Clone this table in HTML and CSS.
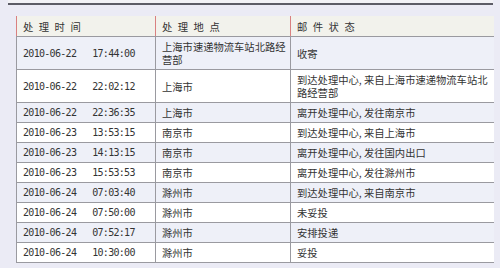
FILE: index.html
```html
<!DOCTYPE html>
<html lang="zh-CN">
<head>
<meta charset="utf-8">
<title>邮件跟踪</title>
<link rel="stylesheet" href="styles.css">
</head>
<body>
<div class="topbar"></div>
<div class="wrap">
<table class="track">
<colgroup><col class="c1"><col class="c2"><col class="c3"></colgroup>
<thead>
<tr><th>处 理 时 间</th><th>处 理 地 点</th><th>邮 件 状 态</th></tr>
</thead>
<tbody>
<tr><td class="dt">2010-06-22&nbsp;&nbsp;&nbsp;17:44:00</td><td>上海市速递物流车站北路经营部</td><td>收寄</td></tr>
<tr><td class="dt">2010-06-22&nbsp;&nbsp;&nbsp;22:02:12</td><td>上海市</td><td>到达处理中心, 来自上海市速递物流车站北路经营部</td></tr>
<tr><td class="dt">2010-06-22&nbsp;&nbsp;&nbsp;22:36:35</td><td>上海市</td><td>离开处理中心, 发往南京市</td></tr>
<tr><td class="dt">2010-06-23&nbsp;&nbsp;&nbsp;13:53:15</td><td>南京市</td><td>到达处理中心, 来自上海市</td></tr>
<tr><td class="dt">2010-06-23&nbsp;&nbsp;&nbsp;14:13:15</td><td>南京市</td><td>离开处理中心, 发往国内出口</td></tr>
<tr><td class="dt">2010-06-23&nbsp;&nbsp;&nbsp;15:53:53</td><td>南京市</td><td>离开处理中心, 发往滁州市</td></tr>
<tr><td class="dt">2010-06-24&nbsp;&nbsp;&nbsp;07:03:40</td><td>滁州市</td><td>到达处理中心, 来自南京市</td></tr>
<tr><td class="dt">2010-06-24&nbsp;&nbsp;&nbsp;07:50:00</td><td>滁州市</td><td>未妥投</td></tr>
<tr><td class="dt">2010-06-24&nbsp;&nbsp;&nbsp;07:52:17</td><td>滁州市</td><td>安排投递</td></tr>
<tr><td class="dt">2010-06-24&nbsp;&nbsp;&nbsp;10:30:00</td><td>滁州市</td><td>妥投</td></tr>
</tbody>
</table>
</div>
</body>
</html>
```
FILE: styles.css
```css
html, body {
  margin: 0;
  padding: 0;
}
body {
  background: #ebebf5;
  font-family: "Noto Sans CJK SC", "Noto Sans", sans-serif;
  color: #333;
  width: 500px;
  height: 268px;
  overflow: hidden;
}
.topbar {
  height: 3px;
  margin: 0 7px 0 8px;
  background: #f2f2f6;
  border-bottom: 2px solid #5c5c66;
}
.wrap {
  padding: 11px 0 0 16px;
}
.track {
  border-collapse: collapse;
  table-layout: fixed;
  width: 477px;
  font-size: 10.3px;
  line-height: 13px;
}
.c1 { width: 139px; }
.c2 { width: 135px; }
.c3 { width: 203px; }
.track th {
  background: #f2f2ec;
  font-weight: normal;
  text-align: left;
  letter-spacing: 1.6px;
  padding: 4px 1px 3px 6px;
  border-left: 1px solid #d98080;
  border-bottom: 1px solid #9a9aa0;
  color: #333;
}
.track td {
  padding: 3px 0 3px 6px;
  vertical-align: middle;
  border-left: 1px solid #9a9aa0;
  border-bottom: 1px solid #9a9aa0;
  background: #ffffff;
}
.track tbody tr:nth-child(odd) td {
  background: #eef0f8;
}
.track td.dt {
  font-family: "DejaVu Sans Mono", "Liberation Mono", monospace;
  font-size: 10px;
  letter-spacing: -0.7px;
  color: #333;
}
```
